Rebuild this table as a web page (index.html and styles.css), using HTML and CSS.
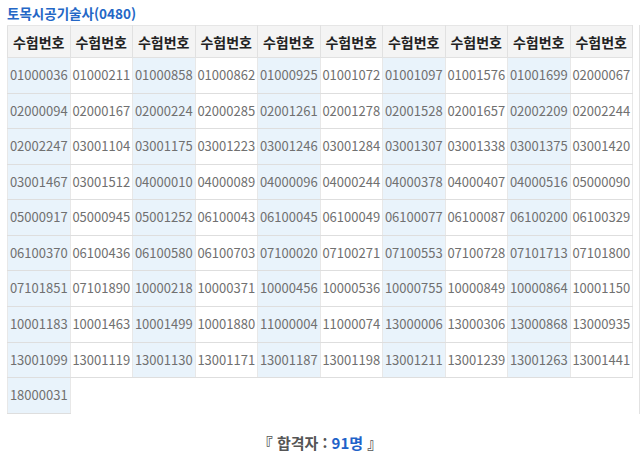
FILE: index.html
```html
<!DOCTYPE html>
<html lang="ko">
<head>
<meta charset="utf-8">
<title>합격자</title>
<link rel="stylesheet" href="styles.css">
</head>
<body>
<div class="page">
  <h2 class="title">토목시공기술사(0480)</h2>
  <div class="wrap">
    <table class="grid">
      <thead>
        <tr><th>수험번호</th><th>수험번호</th><th>수험번호</th><th>수험번호</th><th>수험번호</th><th>수험번호</th><th>수험번호</th><th>수험번호</th><th>수험번호</th><th>수험번호</th></tr>
      </thead>
      <tbody>
        <tr><td>01000036</td><td>01000211</td><td>01000858</td><td>01000862</td><td>01000925</td><td>01001072</td><td>01001097</td><td>01001576</td><td>01001699</td><td>02000067</td></tr>
        <tr><td>02000094</td><td>02000167</td><td>02000224</td><td>02000285</td><td>02001261</td><td>02001278</td><td>02001528</td><td>02001657</td><td>02002209</td><td>02002244</td></tr>
        <tr><td>02002247</td><td>03001104</td><td>03001175</td><td>03001223</td><td>03001246</td><td>03001284</td><td>03001307</td><td>03001338</td><td>03001375</td><td>03001420</td></tr>
        <tr><td>03001467</td><td>03001512</td><td>04000010</td><td>04000089</td><td>04000096</td><td>04000244</td><td>04000378</td><td>04000407</td><td>04000516</td><td>05000090</td></tr>
        <tr><td>05000917</td><td>05000945</td><td>05001252</td><td>06100043</td><td>06100045</td><td>06100049</td><td>06100077</td><td>06100087</td><td>06100200</td><td>06100329</td></tr>
        <tr><td>06100370</td><td>06100436</td><td>06100580</td><td>06100703</td><td>07100020</td><td>07100271</td><td>07100553</td><td>07100728</td><td>07101713</td><td>07101800</td></tr>
        <tr><td>07101851</td><td>07101890</td><td>10000218</td><td>10000371</td><td>10000456</td><td>10000536</td><td>10000755</td><td>10000849</td><td>10000864</td><td>10001150</td></tr>
        <tr><td>10001183</td><td>10001463</td><td>10001499</td><td>10001880</td><td>11000004</td><td>11000074</td><td>13000006</td><td>13000306</td><td>13000868</td><td>13000935</td></tr>
        <tr><td>13001099</td><td>13001119</td><td>13001130</td><td>13001171</td><td>13001187</td><td>13001198</td><td>13001211</td><td>13001239</td><td>13001263</td><td>13001441</td></tr>
        <tr class="last"><td>18000031</td></tr>
      </tbody>
    </table>
  </div>
  <p class="total">『 합격자 : <span class="count">91명</span> 』</p>
</div>
</body>
</html>
```
FILE: styles.css
```css
html, body {
  margin: 0;
  padding: 0;
  background: #fff;
}
.page {
  padding: 4px 0 0 7px;
  font-family: "Noto Sans CJK KR", "Noto Sans", sans-serif;
  color: #666;
}
.title {
  margin: 0 0 3px 0;
  font-size: 13.5px;
  line-height: 18px;
  font-weight: bold;
  color: #2467c6;
}
.wrap {
  width: 632px;
  border-right: 1px solid #e2e2e2;
}
.grid {
  width: 626px;
  border-collapse: collapse;
  table-layout: fixed;
}
.grid th {
  height: 31px;
  padding: 0;
  background: #f4f4f4;
  color: #222;
  font-size: 14px;
  line-height: 20px;
  font-weight: bold;
  text-align: center;
  border: 1px solid #e1e1e1;
  border-top: 1px solid #e6e6e6;
}
.grid td {
  padding: 8px 0;
  font-size: 13px;
  line-height: 18.57px;
  text-align: center;
  color: #707070;
  border: 1px solid #dedede;
  border-left-color: #e8e8e8;
  border-right-color: #e8e8e8;
}
.grid td:nth-child(odd) {
  background: #e9f3fb;
}
.grid tr:first-child td {
  border-top: 1px solid #dcdcdc;
}
.total {
  margin: 18px 0 0 -7px;
  text-align: center;
  font-size: 15px;
  line-height: 22px;
  font-weight: bold;
  color: #555;
}
.count {
  color: #1f63c9;
}
```
